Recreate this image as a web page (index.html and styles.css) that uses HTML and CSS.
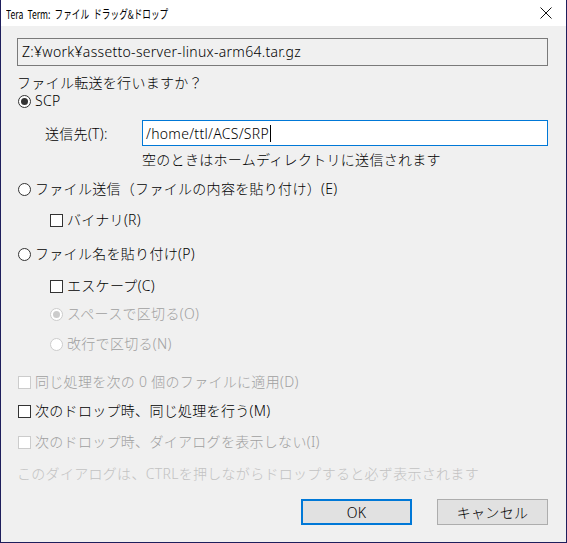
FILE: index.html
```html
<!DOCTYPE html>
<html lang="ja">
<head>
<meta charset="utf-8">
<title>Tera Term: ファイル ドラッグ&amp;ドロップ</title>
<link rel="stylesheet" href="styles.css">
</head>
<body>
<div class="window">
  <div class="titlebar">
    <span class="title">Tera Term: ファイル ドラッグ&amp;ドロップ</span>
    <span class="close">
      <svg width="12" height="12" viewBox="0 0 12 12"><path d="M0.5 0.5 L11.5 11.5 M11.5 0.5 L0.5 11.5" stroke="#111" stroke-width="1" fill="none"/></svg>
    </span>
  </div>
  <div class="content">
    <div class="filename">Z:¥work¥assetto-server-linux-arm64.tar.gz</div>

    <div class="row r-question">ファイル転送を行いますか？</div>

    <div class="row r-scp"><span class="radio checked"></span><span>SCP</span></div>

    <div class="dest">
      <span class="dest-label">送信先(T):</span>
      <div class="dest-input"><span>/home/ttl/ACS/SRP</span><span class="caret"></span></div>
    </div>
    <div class="row r-hint">空のときはホームディレクトリに送信されます</div>

    <div class="row r-send"><span class="radio"></span><span>ファイル送信（ファイルの内容を貼り付け）(E)</span></div>
    <div class="row sub r-binary"><span class="check"></span><span>バイナリ(R)</span></div>

    <div class="row r-paste"><span class="radio"></span><span>ファイル名を貼り付け(P)</span></div>
    <div class="row sub r-escape"><span class="check"></span><span>エスケープ(C)</span></div>
    <div class="row sub disabled r-space"><span class="radio checked"></span><span>スペースで区切る(O)</span></div>
    <div class="row sub disabled r-newline"><span class="radio"></span><span>改行で区切る(N)</span></div>

    <div class="row disabled r-apply"><span class="check"></span><span>同じ処理を次の 0 個のファイルに適用(D)</span></div>
    <div class="row r-same"><span class="check"></span><span>次のドロップ時、同じ処理を行う(M)</span></div>
    <div class="row disabled r-nodialog"><span class="check"></span><span>次のドロップ時、ダイアログを表示しない(I)</span></div>

    <div class="row note r-note">このダイアログは、CTRLを押しながらドロップすると必ず表示されます</div>

    <div class="buttons">
      <button class="btn default">OK</button>
      <button class="btn">キャンセル</button>
    </div>
  </div>
</div>
</body>
</html>
```

FILE: styles.css
```css
html, body {
  margin: 0;
  padding: 0;
  background: #f0f0f0;
}

.window {
  width: 567px;
  height: 543px;
  box-sizing: border-box;
  border: 1px solid #1e1e5c;
  border-top: none;
  background: #f0f0f0;
  font-family: "Noto Sans", "Noto Sans CJK JP", sans-serif;
  font-size: 14px;
  font-weight: 300;
  letter-spacing: 0.3px;
  color: #000;
  display: flex;
  flex-direction: column;
}

.titlebar {
  height: 26px;
  background: #fff;
  display: flex;
  align-items: center;
  justify-content: space-between;
  padding: 0 14px 0 5px;
}

.title {
  font-size: 12px;
  font-weight: 400;
  font-family: "Noto Sans CJK JP", sans-serif;
  letter-spacing: 0;
  word-spacing: 3px;
  color: #000;
  transform: scaleX(0.72);
  transform-origin: left center;
  white-space: nowrap;
}

.close {
  display: flex;
  width: 12px;
  height: 12px;
}

.content {
  padding: 12px 18px 0 16px;
  display: flex;
  flex-direction: column;
}

.filename {
  height: 28px;
  box-sizing: border-box;
  border: 1px solid #7a7a7a;
  background: #f0f0f0;
  padding: 0 4px;
  line-height: 26px;
  white-space: nowrap;
}

.row {
  height: 18px;
  line-height: 18px;
  display: flex;
  align-items: center;
  gap: 4px;
  white-space: nowrap;
}

.row.sub {
  padding-left: 32px;
}

.disabled {
  color: #a0a0a0;
}

.note {
  color: #c2c2c2;
}

/* option markers */
.radio {
  width: 13px;
  height: 13px;
  box-sizing: border-box;
  border: 1px solid #333;
  border-radius: 50%;
  background: #fff;
  margin-left: 1px;
  display: flex;
  align-items: center;
  justify-content: center;
  flex: none;
}

.radio.checked::after {
  content: "";
  width: 7px;
  height: 7px;
  border-radius: 50%;
  background: #333;
}

.disabled .radio {
  border-color: #cccccc;
  background: #fff;
}

.disabled .radio.checked::after {
  background: #cccccc;
}

.check {
  width: 13px;
  height: 13px;
  box-sizing: border-box;
  border: 1px solid #333;
  background: #fff;
  margin-left: 1px;
  flex: none;
}

.disabled .check {
  border-color: #cccccc;
}

/* destination field */
.dest {
  display: flex;
  align-items: center;
  margin-top: 10px;
  height: 26px;
}

.dest-label {
  width: 97px;
  padding-left: 28px;
  flex: none;
}

.dest-input {
  flex: 1;
  height: 26px;
  box-sizing: border-box;
  border: 1px solid #0078d7;
  background: #fff;
  display: flex;
  align-items: center;
  padding-left: 3px;
}

.caret {
  width: 1px;
  height: 17px;
  background: #000;
  margin-left: 1px;
}

.r-question { margin-top: 8px; }
.r-scp { margin-top: 0; }
.r-hint { margin-top: 5px; padding-left: 125px; }
.r-send { margin-top: 11px; }
.r-binary { margin-top: 13px; }
.r-paste { margin-top: 16px; }
.r-escape { margin-top: 14px; }
.r-space { margin-top: 10px; }
.r-newline { margin-top: 12px; }
.r-apply { margin-top: 20px; }
.r-same { margin-top: 11px; }
.r-nodialog { margin-top: 13px; }
.r-note { margin-top: 14px; }

.buttons {
  display: flex;
  justify-content: flex-end;
  gap: 25px;
  margin-top: 16px;
}

.btn {
  width: 111px;
  height: 26px;
  box-sizing: border-box;
  border: 1px solid #adadad;
  background: #e1e1e1;
  font-family: "Noto Sans", "Noto Sans CJK JP", sans-serif;
  font-size: 14px;
  font-weight: 300;
  letter-spacing: 0.3px;
  color: #000;
  padding: 0;
}

.btn.default {
  border: 2px solid #0078d7;
}
```
